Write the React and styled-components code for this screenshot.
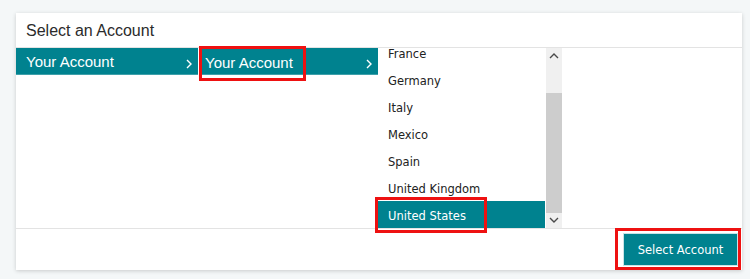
import React from 'react';
import styled, { createGlobalStyle } from 'styled-components';

const GlobalStyle = createGlobalStyle`
  body {
    margin: 0;
    background: #f4f7f8;
    font-family: "Liberation Sans", Arial, sans-serif;
  }
`;

const countries = ['France', 'Germany', 'Italy', 'Mexico', 'Spain', 'United Kingdom', 'United States'];

const Chevron = ({ dir = 'right', color = '#fff' }) => {
  const paths = {
    right: 'M1 1 L5 5 L1 9',
    up: 'M1 5 L5 1 L9 5',
    down: 'M1 1 L5 5 L9 1',
  };
  const size = dir === 'right' ? { width: 6, height: 10 } : { width: 10, height: 6 };
  return (
    <svg {...size} viewBox={`0 0 ${size.width} ${size.height}`}>
      <path d={paths[dir]} fill='none' stroke={color} strokeWidth='1.4' />
    </svg>
  );
};

const App = () => {
  return (
    <>
      <GlobalStyle />
      <Page>
        <Panel>
          <Header>Select an Account</Header>
          <Body>
            <Column width={182}>
              <Crumb>
                <span className='label'>Your Account</span>
                <Chevron />
              </Crumb>
            </Column>
            <Column width={179} gapLeft>
              <Crumb pad={3}>
                <span className='label marked'>Your Account</span>
                <Chevron />
              </Crumb>
            </Column>
            <ListBox>
              <List>
                <Rows>
                  {countries.map((c) => (
                    <Row key={c} selected={c === 'United States'}>{c}</Row>
                  ))}
                </Rows>
              </List>
              <ScrollBar>
                <ScrollArrow><Chevron dir='up' color='#4a4a4a' /></ScrollArrow>
                <Track>
                  <Thumb />
                </Track>
                <ScrollArrow><Chevron dir='down' color='#4a4a4a' /></ScrollArrow>
              </ScrollBar>
            </ListBox>
          </Body>
          <Footer>
            <Button>Select Account</Button>
          </Footer>
        </Panel>
      </Page>
    </>
  );
};

export default App;

const Page = styled.div`
  padding: 13px 8px 9px 16px;
`;

const Panel = styled.div`
  width: 726px;
  height: 257px;
  background: #fff;
  box-shadow: 0 1px 4px rgba(0, 0, 0, 0.18);
  display: flex;
  flex-direction: column;
`;

const Header = styled.div`
  height: 35px;
  flex-shrink: 0;
  box-sizing: border-box;
  padding: 9px 0 0 10px;
  font-size: 16px;
  color: #2b2b2b;
  border-bottom: 1px solid #e3e3e3;
`;

const Body = styled.div`
  height: 180px;
  flex-shrink: 0;
  display: flex;
  align-items: flex-start;
`;

const Column = styled.div`
  width: ${(p) => p.width}px;
  margin-left: ${(p) => (p.gapLeft ? 1 : 0)}px;
`;

const Crumb = styled.div`
  height: 27px;
  background: #00828f;
  border-bottom: 1px solid #3ea0aa;
  box-sizing: border-box;
  display: flex;
  align-items: center;
  justify-content: space-between;
  padding: 0 6px 0 ${(p) => p.pad ?? 10}px;
  color: #fff;
  font-size: 15px;

  .label {
    display: inline-block;
    line-height: 27px;
  }

  .marked {
    width: 95px;
    padding: 0 3px;
    height: 29px;
    line-height: 27px;
    margin-top: 4px;
    outline: 3px solid #ee1111;
  }

  svg {
    margin-top: 5px;
  }
`;

const ListBox = styled.div`
  position: relative;
  display: flex;
  height: 180px;

  &::after {
    content: '';
    position: absolute;
    left: -3px;
    top: 149px;
    width: 106px;
    height: 30px;
    border: 3px solid #ee1111;
  }
`;

const List = styled.div`
  width: 168px;
  height: 180px;
  overflow: hidden;
`;

const Rows = styled.div`
  margin-top: -9px;
`;

const Row = styled.div`
  height: 27px;
  line-height: 30px;
  padding-left: 10px;
  font-family: "DejaVu Sans", Tahoma, sans-serif;
  font-size: 11.5px;
  width: ${(p) => (p.selected ? '157px' : 'auto')};
  background: ${(p) => (p.selected ? '#00828f' : 'transparent')};
  color: ${(p) => (p.selected ? '#fff' : '#222')};
`;

const ScrollBar = styled.div`
  width: 16px;
  height: 180px;
  background: #f0f0f0;
  display: flex;
  flex-direction: column;
`;

const ScrollArrow = styled.div`
  height: 16px;
  display: flex;
  align-items: center;
  justify-content: center;
`;

const Track = styled.div`
  flex: 1;
  padding-top: 29px;
`;

const Thumb = styled.div`
  height: 120px;
  background: #cdcdcd;
`;

const Footer = styled.div`
  flex: 1;
  border-top: 1px solid #e3e3e3;
  display: flex;
  justify-content: flex-end;
  align-items: flex-start;
  padding: 4px 4px 0 0;
`;

const Button = styled.button`
  position: relative;
  width: 115px;
  height: 33px;
  background: #00828f;
  color: #fff;
  border: 1px solid #c9e3e6;
  font-family: "DejaVu Sans", Tahoma, sans-serif;
  font-size: 11.5px;
  cursor: pointer;

  &::after {
    content: '';
    position: absolute;
    left: -9px;
    right: -4px;
    top: -6px;
    bottom: -5px;
    border: 3px solid #ee1111;
  }
`;
